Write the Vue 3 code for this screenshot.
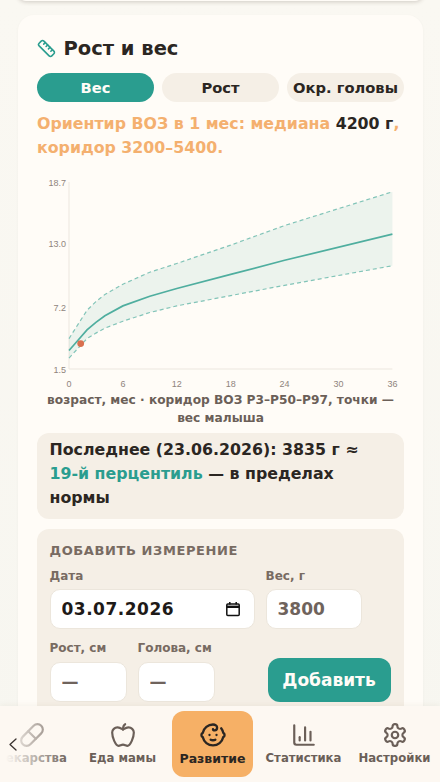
<script setup>
const X0 = 69, XW = 323.4 / 36, Y0 = 370, YK = 187 / 17.2
const px = (m) => X0 + m * XW
const py = (w) => Y0 - (w - 1.5) * YK
const months = [0, 1, 2, 3, 4, 6, 9, 12, 18, 24, 36]
const p3 = [2.5, 3.4, 4.3, 4.8, 5.25, 5.9, 6.7, 7.3, 8.25, 9.2, 11]
const p50 = [3.2, 4.15, 5.1, 5.8, 6.4, 7.3, 8.2, 8.9, 10.2, 11.5, 13.9]
const p97 = [4.3, 5.6, 6.9, 7.7, 8.35, 9.3, 10.4, 11.2, 12.9, 14.7, 17.8]
const line = (a) => a.map((w, i) => `${px(months[i]).toFixed(1)},${py(w).toFixed(1)}`).join(' ')
const band = line(p97) + ' ' + p3.map((w, i) => `${px(months[i]).toFixed(1)},${py(w).toFixed(1)}`).reverse().join(' ')
const yTicks = ['1.5', '7.2', '13.0', '18.7'].map((t) => ({ t, y: py(parseFloat(t)) + 3.5 }))
const xTicks = [0, 6, 12, 18, 24, 30, 36].map((m) => ({ m, x: px(m) }))
</script>

<template>
  <div class="page">
    <main class="content">
      <div class="prev-card"></div>
      <section class="card">
        <h2 class="title">
          <svg class="title-icon" viewBox="0 0 24 24" fill="none" stroke="currentColor" stroke-width="2" stroke-linecap="round" stroke-linejoin="round">
            <path d="M21.3 15.3a2.4 2.4 0 0 1 0 3.4l-2.6 2.6a2.4 2.4 0 0 1-3.4 0L2.7 8.7a2.41 2.41 0 0 1 0-3.4l2.6-2.6a2.41 2.41 0 0 1 3.4 0Z" />
            <path d="m14.5 12.5 2-2" /><path d="m11.5 9.5 2-2" /><path d="m8.5 6.5 2-2" /><path d="m17.5 15.5 2-2" />
          </svg>
          Рост и вес
        </h2>
        <div class="pills">
          <button class="pill active">Вес</button>
          <button class="pill">Рост</button>
          <button class="pill">Окр. головы</button>
        </div>
        <p class="note">Ориентир ВОЗ в 1 мес: медиана <b>4200 г</b>, коридор 3200–5400.</p>

        <svg class="chart" viewBox="37 172 366 220" width="366" height="220">
          <line x1="69" y1="183" x2="69" y2="370" class="axis" />
          <line x1="69" y1="370" x2="392.4" y2="370" class="axis" />
          <polygon :points="band" fill="#2a9d8f" fill-opacity="0.09" />
          <polyline :points="line(p97)" class="dash" />
          <polyline :points="line(p3)" class="dash" />
          <polyline :points="line(p50)" class="median" />
          <circle :cx="px(1.3)" :cy="py(3.835)" r="3.4" fill="#d9704f" />
          <text v-for="t in yTicks" :key="t.t" x="66" :y="t.y" text-anchor="end" class="tick">{{ t.t }}</text>
          <text v-for="t in xTicks" :key="t.m" :x="t.x" y="388" text-anchor="middle" class="tick">{{ t.m }}</text>
        </svg>
        <p class="caption">возраст, мес · коридор ВОЗ Р3–Р50–Р97, точки — вес малыша</p>

        <div class="last">Последнее (23.06.2026): 3835 г ≈ <span class="teal">19-й перцентиль</span> — в пределах нормы</div>

        <form class="form" @submit.prevent>
          <div class="form-title">ДОБАВИТЬ ИЗМЕРЕНИЕ</div>
          <div class="row row-one">
            <label class="field grow">
              <span class="lab">Дата</span>
              <span class="inp date">
                <input class="date-input" value="03.07.2026" />
                <svg class="cal" viewBox="0 0 16 16" fill="none" stroke="#111" stroke-width="1.5">
                  <rect x="1.8" y="3" width="12.4" height="11.5" rx="1" />
                  <path d="M1.8 5.8h12.4" stroke-width="2.4" />
                  <path d="M4.8 1v2.4M11.2 1v2.4" />
                </svg>
              </span>
            </label>
            <label class="field w96">
              <span class="lab">Вес, г</span>
              <input class="inp" placeholder="3800" />
            </label>
          </div>
          <div class="row row-two">
            <label class="field w77">
              <span class="lab">Рост, см</span>
              <input class="inp" placeholder="—" />
            </label>
            <label class="field w77">
              <span class="lab">Голова, см</span>
              <input class="inp" placeholder="—" />
            </label>
            <button class="add">Добавить</button>
          </div>
        </form>
      </section>
    </main>

    <nav class="nav">
      <div class="tabs">
        <a class="tab">
          <svg viewBox="0 0 24 24"><path d="m10.5 20.5 10-10a4.95 4.95 0 1 0-7-7l-10 10a4.95 4.95 0 1 0 7 7Z" /><path d="m8.5 8.5 7 7" /></svg>
          <span>Лекарства</span>
        </a>
        <a class="tab">
          <svg viewBox="0 0 24 24"><path d="M12 20.94c1.5 0 2.75 1.06 4 1.06 3 0 6-8 6-12.22A4.91 4.91 0 0 0 17 5c-2.22 0-4 1.44-5 2-1-.56-2.78-2-5-2a4.9 4.9 0 0 0-5 4.78C2 14 5 22 8 22c1.25 0 2.5-1.06 4-1.06Z" /><path d="M14 2c-1 .5-2 2-2 5" /></svg>
          <span>Еда мамы</span>
        </a>
        <a class="tab on">
          <svg viewBox="0 0 24 24"><path d="M9 12h.01" /><path d="M15 12h.01" /><path d="M10 16c.5.3 1.2.5 2 .5s1.5-.2 2-.5" /><path d="M19 6.3a9 9 0 0 1 1.8 3.9 2 2 0 0 1 0 3.6 9 9 0 0 1-17.6 0 2 2 0 0 1 0-3.6A9 9 0 0 1 12 3c2 0 3.5 1.1 3.5 2.5s-.9 2.5-2 2.5c-.8 0-1.5-.4-1.5-1" /></svg>
          <span>Развитие</span>
        </a>
        <a class="tab">
          <svg viewBox="0 0 24 24"><path d="M3 3v16a2 2 0 0 0 2 2h16" /><path d="M18 17V9" /><path d="M13 17V5" /><path d="M8 17v-3" /></svg>
          <span>Статистика</span>
        </a>
        <a class="tab">
          <svg viewBox="0 0 24 24"><path d="M12.22 2h-.44a2 2 0 0 0-2 2v.18a2 2 0 0 1-1 1.73l-.43.25a2 2 0 0 1-2 0l-.15-.08a2 2 0 0 0-2.73.73l-.22.38a2 2 0 0 0 .73 2.73l.15.1a2 2 0 0 1 1 1.72v.51a2 2 0 0 1-1 1.74l-.15.09a2 2 0 0 0-.73 2.73l.22.38a2 2 0 0 0 2.73.73l.15-.08a2 2 0 0 1 2 0l.43.25a2 2 0 0 1 1 1.73V20a2 2 0 0 0 2 2h.44a2 2 0 0 0 2-2v-.18a2 2 0 0 1 1-1.73l.43-.25a2 2 0 0 1 2 0l.15.08a2 2 0 0 0 2.73-.73l.22-.39a2 2 0 0 0-.73-2.73l-.15-.08a2 2 0 0 1-1-1.74v-.5a2 2 0 0 1 1-1.74l.15-.09a2 2 0 0 0 .73-2.73l-.22-.38a2 2 0 0 0-2.73-.73l-.15.08a2 2 0 0 1-2 0l-.43-.25a2 2 0 0 1-1-1.73V4a2 2 0 0 0-2-2z" /><circle cx="12" cy="12" r="3" /></svg>
          <span>Настройки</span>
        </a>
      </div>
      <div class="fade"></div>
      <svg class="chev" viewBox="0 0 8 13" fill="none" stroke="#3a3330" stroke-width="1.3" stroke-linecap="round" stroke-linejoin="round"><path d="M7 1 1 6.5 7 12" /></svg>
    </nav>
  </div>
</template>

<style>
html, body { margin: 0; background: #f9f7f1; }
</style>

<style scoped>
.page {
  position: relative;
  width: 440px;
  height: 782px;
  overflow: hidden;
  background: linear-gradient(180deg, #faf8f2 0%, #f7f6f0 100%);
  font-family: "DejaVu Sans", sans-serif;
  color: #2b2622;
}
.content { padding: 0 17px 0 18px; }
.prev-card {
  height: 16px;
  margin-top: -15px;
  background: #fffcf7;
  border-radius: 16px;
  box-shadow: 0 1px 4px rgba(60, 45, 30, 0.22);
}
.card {
  margin-top: 14px;
  padding: 19px;
  background: #fffcf7;
  border-radius: 16px;
  box-shadow: 0 1px 3px rgba(90, 70, 50, 0.05);
}
.title {
  display: flex;
  align-items: center;
  gap: 7.5px;
  box-sizing: border-box;
  margin: 0;
  height: 28px;
  padding-top: 2px;
  font-size: 19.5px;
  font-weight: 700;
  line-height: 26px;
}
.title-icon { width: 19px; height: 19px; margin-top: -2px; color: #2a9d8f; }
.pills { display: flex; gap: 8px; margin-top: 11px; }
.pill {
  flex: 1 1 0;
  height: 29px;
  padding: 0 4px;
  border: 0;
  border-radius: 15px;
  background: #f5efe6;
  color: #2b2622;
  font: 700 14.7px "DejaVu Sans", sans-serif;
  white-space: nowrap;
}
.pill.active { background: #2a9d8f; color: #fffcf7; }
.note {
  margin: 10px 0 0;
  font-size: 15.8px;
  font-weight: 700;
  line-height: 24px;
  color: #f4b06f;
}
.note b { color: #2b2622; }
.chart { display: block; margin-top: 11px; }
.axis { stroke: #ece7df; stroke-width: 1; }
.dash { fill: none; stroke: #82c4b8; stroke-width: 1.2; stroke-dasharray: 4 3; }
.median { fill: none; stroke: #4fae9f; stroke-width: 1.7; }
.tick { font: 9px "Liberation Sans", sans-serif; fill: #8f847d; }
.caption {
  margin: 0;
  font-size: 12.2px;
  font-weight: 700;
  line-height: 18px;
  text-align: center;
  color: #6b5f58;
}
.last {
  margin-top: 6px;
  padding: 5px 12.5px 9px;
  background: #f5efe6;
  border-radius: 12px;
  font-size: 15.8px;
  font-weight: 700;
  line-height: 24px;
  color: #2b2622;
}
.teal { color: #2a9d8f; white-space: nowrap; }
.form {
  margin-top: 10px;
  height: 260px;
  padding: 14px 12.5px;
  box-sizing: border-box;
  background: #f5efe6;
  border-radius: 12px;
}
.form-title {
  font-size: 13px;
  font-weight: 700;
  letter-spacing: 0.6px;
  line-height: 16px;
  color: #786b62;
}
.row { display: flex; gap: 11px; }
.row-one { margin-top: 9px; }
.row-two { margin-top: 11px; align-items: flex-end; }
.field { display: flex; flex-direction: column; gap: 5px; }
.row-two .field { gap: 6px; }
.grow { width: 205px; }
.w96 { width: 96.5px; }
.w77 { width: 77px; }
.lab { font-size: 12px; font-weight: 700; line-height: 16px; color: #786b62; }
.inp {
  box-sizing: border-box;
  width: 100%;
  height: 40px;
  padding: 0 11px;
  background: #fff;
  border: 1px solid #ece6dc;
  border-radius: 10px;
  outline: none;
  font: 700 17px "DejaVu Sans", sans-serif;
  color: #2b2622;
}
.inp::placeholder { color: #6f635c; opacity: 1; }
.date { display: flex; align-items: center; }
.date-input {
  flex: 1;
  min-width: 0;
  padding: 0;
  border: 0;
  outline: none;
  background: none;
  font: inherit;
  letter-spacing: 0.5px;
  color: #1e1a18;
}
.cal { width: 16px; height: 16px; margin-right: 2px; }
.add {
  flex: none;
  width: 123px;
  height: 44px;
  margin-left: 42px;
  border: 0;
  border-radius: 12px;
  background: #2a9d8f;
  color: #fffcf7;
  font: 700 17px "DejaVu Sans", sans-serif;
}
.nav {
  position: absolute;
  left: 0;
  right: 0;
  bottom: 0;
  height: 76px;
  background: #fdf8f2;
  box-shadow: 0 -1px 6px rgba(80, 60, 40, 0.06);
  overflow: hidden;
}
.tabs {
  display: flex;
  align-items: stretch;
  height: 66px;
  margin: 5px 0 0 -14px;
}
.tab {
  flex: 0 0 auto;
  width: 91px;
  display: flex;
  flex-direction: column;
  align-items: center;
  padding-top: 11px;
  box-sizing: border-box;
  font-size: 11.7px;
  font-weight: 700;
  color: #6b5f58;
}
.tab svg {
  width: 26px;
  height: 26px;
  fill: none;
  stroke: currentColor;
  stroke-width: 2;
  stroke-linecap: round;
  stroke-linejoin: round;
}
.tab span { margin-top: 2px; line-height: 16px; white-space: nowrap; }
.tab.on {
  width: 81px;
  margin: 0 5px 0 4px;
  padding-top: 10px;
  font-size: 12.5px;
  background: #f6b066;
  border-radius: 12px;
  color: #2b2622;
}
.tab.on svg { width: 28px; height: 28px; }
.fade {
  position: absolute;
  left: 0;
  top: 0;
  bottom: 0;
  width: 70px;
  background: linear-gradient(90deg, #fdf8f2 8%, rgba(253, 248, 242, 0) 100%);
}
.chev { position: absolute; left: 9px; top: 32px; width: 8px; height: 13px; }
</style>
